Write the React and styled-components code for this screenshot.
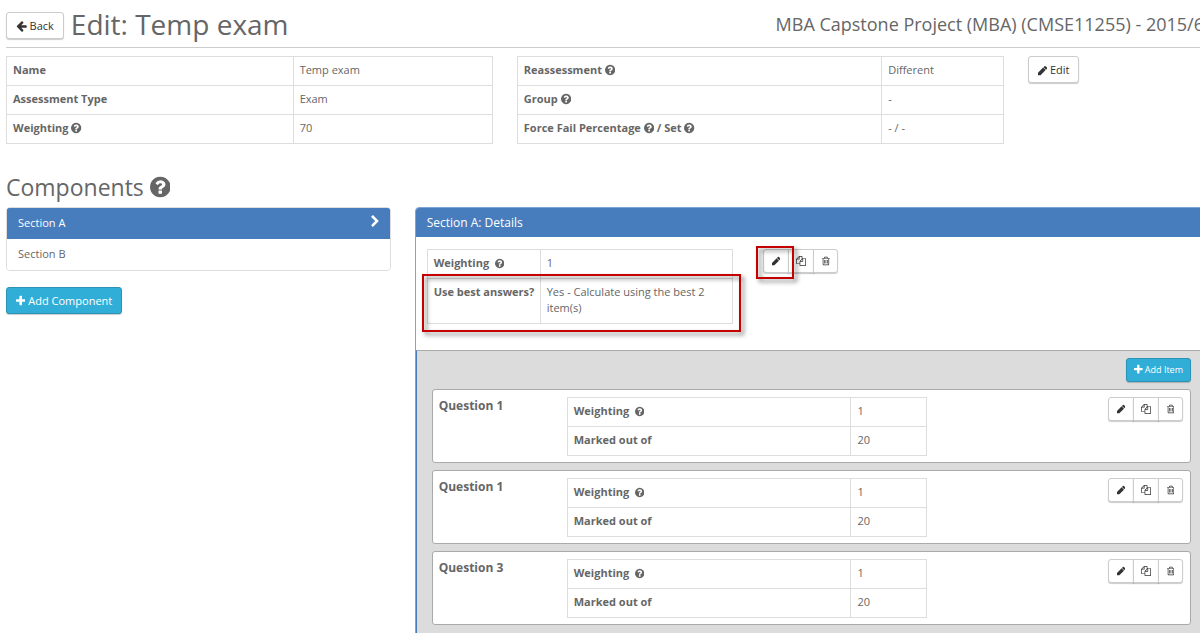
import React from 'react';
import styled, { createGlobalStyle, css } from 'styled-components';

const GlobalStyle = createGlobalStyle`
  * {
    box-sizing: border-box;
  }
  body {
    margin: 0;
    background: white;
    color: #666;
    font-family: 'Open Sans', 'Noto Sans', sans-serif;
    font-size: 11px;
    line-height: 16px;
  }
`;

const Page = styled.div`
  padding-left: 6px;
  overflow-x: clip;
`;
// the content runs a little past the right edge, like a bootstrap row
const Content = styled.div`
  margin-right: -8px;
`;
const Header = styled.header`
  display: flex;
  align-items: center;
  height: 48px;
  padding-right: 4px;
  border-bottom: 1px solid #ccc;
`;
const PageTitle = styled.h1`
  flex: 1;
  margin: 0 0 0 7px;
  font-size: 28px;
  line-height: 40px;
  font-weight: normal;
`;
const CourseName = styled.h2`
  margin: 0;
  font-size: 18px;
  line-height: 32px;
  font-weight: normal;
  white-space: nowrap;
`;
const Grid = styled.div`
  display: grid;
  grid-template-columns: repeat(12, minmax(0, 1fr));
  column-gap: 24px;
  align-items: start;
`;
const TopGrid = styled(Grid)`
  padding-top: 8px;
`;
const Col = styled.div`
  position: relative;
  grid-column: span ${props => props.$span};
  text-align: ${props => props.$align || 'left'};
`;
const DataTable = styled.table`
  width: 100%;
  table-layout: fixed;
  border-collapse: collapse;

  th, td {
    padding: 5px 6px 7px;
    border: 1px solid #ddd;
    text-align: left;
    vertical-align: top;
  }
  th {
    width: ${props => props.$split};
    font-weight: bold;
    white-space: nowrap;
  }
`;
const Svg = styled.svg`
  height: ${props => props.$size}px;
  fill: currentColor;
  vertical-align: ${props => props.$align || '-2px'};
`;
const buttonColors = css`
  border: 1px solid ${props => (props.$info ? '#2a93b6' : '#ccc')};
  background: ${props => (props.$info ? '#31aed8' : 'white')};
  color: ${props => (props.$info ? 'white' : '#333')};
  box-shadow: 0 1px 1px rgba(0, 0, 0, 0.2);
`;
const Button = styled.button`
  ${buttonColors}
  height: ${props => (props.$small ? 24 : 27)}px;
  padding: 0 ${props => (props.$small ? 7 : 9)}px;
  border-radius: 3px;
  font-family: inherit;
  font-size: ${props => (props.$small ? 9 : 11)}px;
  line-height: 16px;
  white-space: nowrap;
  cursor: pointer;
`;
const BackButton = styled(Button)`
  align-self: flex-end;
  margin-bottom: 8px;
`;
const ButtonGroup = styled.div`
  display: inline-flex;
  margin-left: 6px;
  vertical-align: top;
`;
const IconButton = styled.button`
  ${buttonColors}
  display: flex;
  align-items: center;
  justify-content: center;
  width: 26px;
  height: 24px;
  padding: 0;
  cursor: pointer;

  & + & {
    margin-left: -1px;
  }
  &:first-child {
    border-radius: 3px 0 0 3px;
  }
  &:last-child {
    width: 25px;
    border-radius: 0 3px 3px 0;
  }
`;
const ComponentsTitle = styled.h2`
  margin: 26px 0 3px;
  font-size: 23px;
  line-height: 34px;
  font-weight: normal;
`;
const SectionList = styled.nav`
  margin-bottom: 16px;
  border: 1px solid #ddd;
  border-radius: 4px;
  overflow: hidden;
`;
const SectionLink = styled.a`
  display: flex;
  justify-content: space-between;
  height: 31px;
  padding: 7px 11px;
  text-decoration: none;
  color: ${props => (props.$active ? 'white' : '#666')};
  background: ${props => (props.$active ? '#487dbd' : 'white')};
  box-shadow: ${props => (props.$active ? '0 0 0 1px #487dbd' : 'none')};
`;
const Panel = styled.section`
  border: 1px solid #7fa4d6;
  border-radius: 4px;
`;
const PanelTitle = styled.h3`
  margin: 0;
  padding: 6px 11px;
  border-radius: 3px 3px 0 0;
  background: #487dbd;
  color: white;
  font-size: 12px;
  line-height: 17px;
  font-weight: normal;
`;
const PanelBody = styled.div`
  padding: 12px 11px 26px;
`;
const Items = styled.div`
  padding: 7px 16px 16px 15px;
  border-top: 1px solid #aaa;
  border-left: 1px solid #487dbd;
  background: #dcdcdc;
`;
const ItemsToolbar = styled.div`
  display: flex;
  justify-content: flex-end;
  margin-bottom: 7px;
`;
const Item = styled(Grid)`
  margin-bottom: 7px;
  padding: 7px 7px 6px 6px;
  border: 1px solid #aaa;
  border-radius: 3px;
  background: white;
`;
const ItemName = styled.h4`
  margin: 0;
  font-size: 12px;
  line-height: 18px;
`;
const Highlight = styled.div`
  position: absolute;
  top: ${props => props.$top}px;
  left: ${props => props.$left}px;
  right: ${props => props.$right};
  bottom: ${props => props.$bottom}px;
  width: ${props => props.$width};
  border: 2px solid #c40000;
  filter: drop-shadow(3px 3px 2px rgba(0, 0, 0, 0.5));
  pointer-events: none;
`;

const icons = {
  back: {
    box: '64 0 1600 1792',
    d: 'M1664 896v128q0 53-32.5 90.5t-84.5 37.5h-704l293 294q38 36 38 90t-38 90l-75 76q-37 37-90 37-52 0-91-37l-651-652q-37-37-37-90 0-52 37-91l651-650q38-38 91-38 52 0 90 38l75 74q38 38 38 91t-38 91l-293 293h704q52 0 84.5 37.5t32.5 90.5z',
  },
  help: {
    box: '128 0 1536 1792',
    d: 'M1024 1376v-192q0-14-9-23t-23-9h-192q-14 0-23 9t-9 23v192q0 14 9 23t23 9h192q14 0 23-9t9-23zm256-672q0-88-55.5-163t-138.5-116-170-41q-243 0-371 213-15 24 8 42l132 100q7 6 19 6 16 0 25-12 53-68 86-92 34-24 86-24 48 0 85.5 26t37.5 59q0 38-20 61t-68 45q-63 28-115.5 86.5t-52.5 125.5v36q0 14 9 23t23 9h192q14 0 23-9t9-23q0-19 21.5-49.5t54.5-49.5q32-18 49-28.5t46-35 44.5-48 28-60.5 12.5-81zm384 192q0 209-103 385.5t-279.5 279.5-385.5 103-385.5-103-279.5-279.5-103-385.5 103-385.5 279.5-279.5 385.5-103 385.5 103 279.5 279.5 103 385.5z',
  },
  pencil: {
    box: '128 0 1536 1792',
    d: 'M960 416l416 416-832 832h-416v-416zm683 96q0 53-37 90l-166 166-416-416 166-165q36-38 90-38 53 0 91 38l235 234q37 39 37 91z',
  },
  copy: {
    box: '0 0 1792 1792',
    d: 'M1696 384q40 0 68 28t28 68v1216q0 40-28 68t-68 28h-960q-40 0-68-28t-28-68v-288h-544q-40 0-68-28t-28-68v-672q0-40 20-88t48-76l408-408q28-28 76-48t88-20h416q40 0 68 28t28 68v328q68-40 128-40h416zm-544 213l-299 299h299v-299zm-640-384l-299 299h299v-299zm196 647l316-316v-416h-384v416q0 40-28 68t-68 28h-416v640h512v-256q0-40 20-88t48-76zm956 804v-1152h-384v416q0 40-28 68t-68 28h-416v640h896z',
  },
  trash: {
    box: '192 0 1408 1792',
    d: 'M704 736v576q0 14-9 23t-23 9h-64q-14 0-23-9t-9-23v-576q0-14 9-23t23-9h64q14 0 23 9t9 23zm256 0v576q0 14-9 23t-23 9h-64q-14 0-23-9t-9-23v-576q0-14 9-23t23-9h64q14 0 23 9t9 23zm256 0v576q0 14-9 23t-23 9h-64q-14 0-23-9t-9-23v-576q0-14 9-23t23-9h64q14 0 23 9t9 23zm128 724v-948h-896v948q0 22 7 40.5t14.5 27 10.5 8.5h832q3 0 10.5-8.5t14.5-27 7-40.5zm-672-1076h448l-48-117q-7-9-17-11h-317q-10 2-17 11zm928 32v64q0 14-9 23t-23 9h-96v948q0 83-47 143.5t-113 60.5h-832q-66 0-113-58.5t-47-141.5v-952h-96q-14 0-23-9t-9-23v-64q0-14 9-23t23-9h309l70-167q15-37 54-63t79-26h320q40 0 79 26t54 63l70 167h309q14 0 23 9t9 23z',
  },
  plus: {
    box: '192 0 1408 1792',
    d: 'M1600 736v192q0 40-28 68t-68 28h-416v416q0 40-28 68t-68 28h-192q-40 0-68-28t-28-68v-416h-416q-40 0-68-28t-28-68v-192q0-40 28-68t68-28h416v-416q0-40 28-68t68-28h192q40 0 68 28t28 68v416h416q40 0 68 28t28 68z',
  },
  chevron: {
    box: '320 0 1088 1792',
    d: 'M1363 877l-742 742q-19 19-45 19t-45-19l-166-166q-19-19-19-45t19-45l531-531-531-531q-19-19-19-45t19-45l166-166q19-19 45-19t45 19l742 742q19 19 19 45t-19 45z',
  },
};

const Icon = ({ name, size = 12, align }) => (
  <Svg viewBox={icons[name].box} $size={size} $align={align} aria-hidden="true">
    <path d={icons[name].d} />
  </Svg>
);

const EditButtons = () => (
  <ButtonGroup>
    <IconButton aria-label="Edit"><Icon name="pencil" size={10} /></IconButton>
    <IconButton aria-label="Copy"><Icon name="copy" size={10} /></IconButton>
    <IconButton aria-label="Delete"><Icon name="trash" size={10} /></IconButton>
  </ButtonGroup>
);

const questions = ['Question 1', 'Question 1', 'Question 3'];

const App = () => {
  return (
    <Page>
      <GlobalStyle />
      <Content>
        <Header>
          <BackButton><Icon name="back" /> Back</BackButton>
          <PageTitle>Edit: Temp exam</PageTitle>
          <CourseName>MBA Capstone Project (MBA) (CMSE11255) - 2015/6</CourseName>
        </Header>
        <TopGrid>
          <Col $span={5}>
            <DataTable $split="59%">
              <tbody>
                <tr><th>Name</th><td>Temp exam</td></tr>
                <tr><th>Assessment Type</th><td>Exam</td></tr>
                <tr><th>Weighting <Icon name="help" /></th><td>70</td></tr>
              </tbody>
            </DataTable>
          </Col>
          <Col $span={5}>
            <DataTable $split="75%">
              <tbody>
                <tr><th>Reassessment <Icon name="help" /></th><td>Different</td></tr>
                <tr><th>Group <Icon name="help" /></th><td>-</td></tr>
                <tr>
                  <th>Force Fail Percentage <Icon name="help" /> / Set <Icon name="help" /></th>
                  <td>- / -</td>
                </tr>
              </tbody>
            </DataTable>
          </Col>
          <Col $span={2}>
            <Button><Icon name="pencil" size={11} /> Edit</Button>
          </Col>
        </TopGrid>
        <ComponentsTitle>Components <Icon name="help" size={24} align="-3px" /></ComponentsTitle>
        <Grid>
          <Col $span={4}>
            <SectionList>
              <SectionLink href="#section-a" $active>Section A <Icon name="chevron" size={13} /></SectionLink>
              <SectionLink href="#section-b">Section B</SectionLink>
            </SectionList>
            <Button $info><Icon name="plus" /> Add Component</Button>
          </Col>
          <Col $span={8}>
            <Panel>
              <PanelTitle>Section A: Details</PanelTitle>
              <PanelBody>
                <Grid>
                  <Col $span={5}>
                    <DataTable $split="37%">
                      <tbody>
                        <tr><th>Weighting &nbsp;<Icon name="help" size={11} /></th><td>1</td></tr>
                        <tr><th>Use best answers?</th><td>Yes - Calculate using the best 2 item(s)</td></tr>
                      </tbody>
                    </DataTable>
                    <Highlight $top={25} $left={-5} $right="-8px" $bottom={-8} />
                  </Col>
                  <Col $span={7}>
                    <EditButtons />
                    <Highlight $top={-3} $left={-1} $width="38px" $bottom={-6} />
                  </Col>
                </Grid>
              </PanelBody>
              <Items>
                <ItemsToolbar>
                  <Button $info $small><Icon name="plus" size={11} /> Add Item</Button>
                </ItemsToolbar>
                {questions.map((name, i) => (
                  <Item key={i}>
                    <Col $span={2}><ItemName>{name}</ItemName></Col>
                    <Col $span={6}>
                      <DataTable $split="79%">
                        <tbody>
                          <tr><th>Weighting &nbsp;<Icon name="help" size={11} /></th><td>1</td></tr>
                          <tr><th>Marked out of</th><td>20</td></tr>
                        </tbody>
                      </DataTable>
                    </Col>
                    <Col $span={4} $align="right"><EditButtons /></Col>
                  </Item>
                ))}
              </Items>
            </Panel>
          </Col>
        </Grid>
      </Content>
    </Page>
  );
};

export default App;
